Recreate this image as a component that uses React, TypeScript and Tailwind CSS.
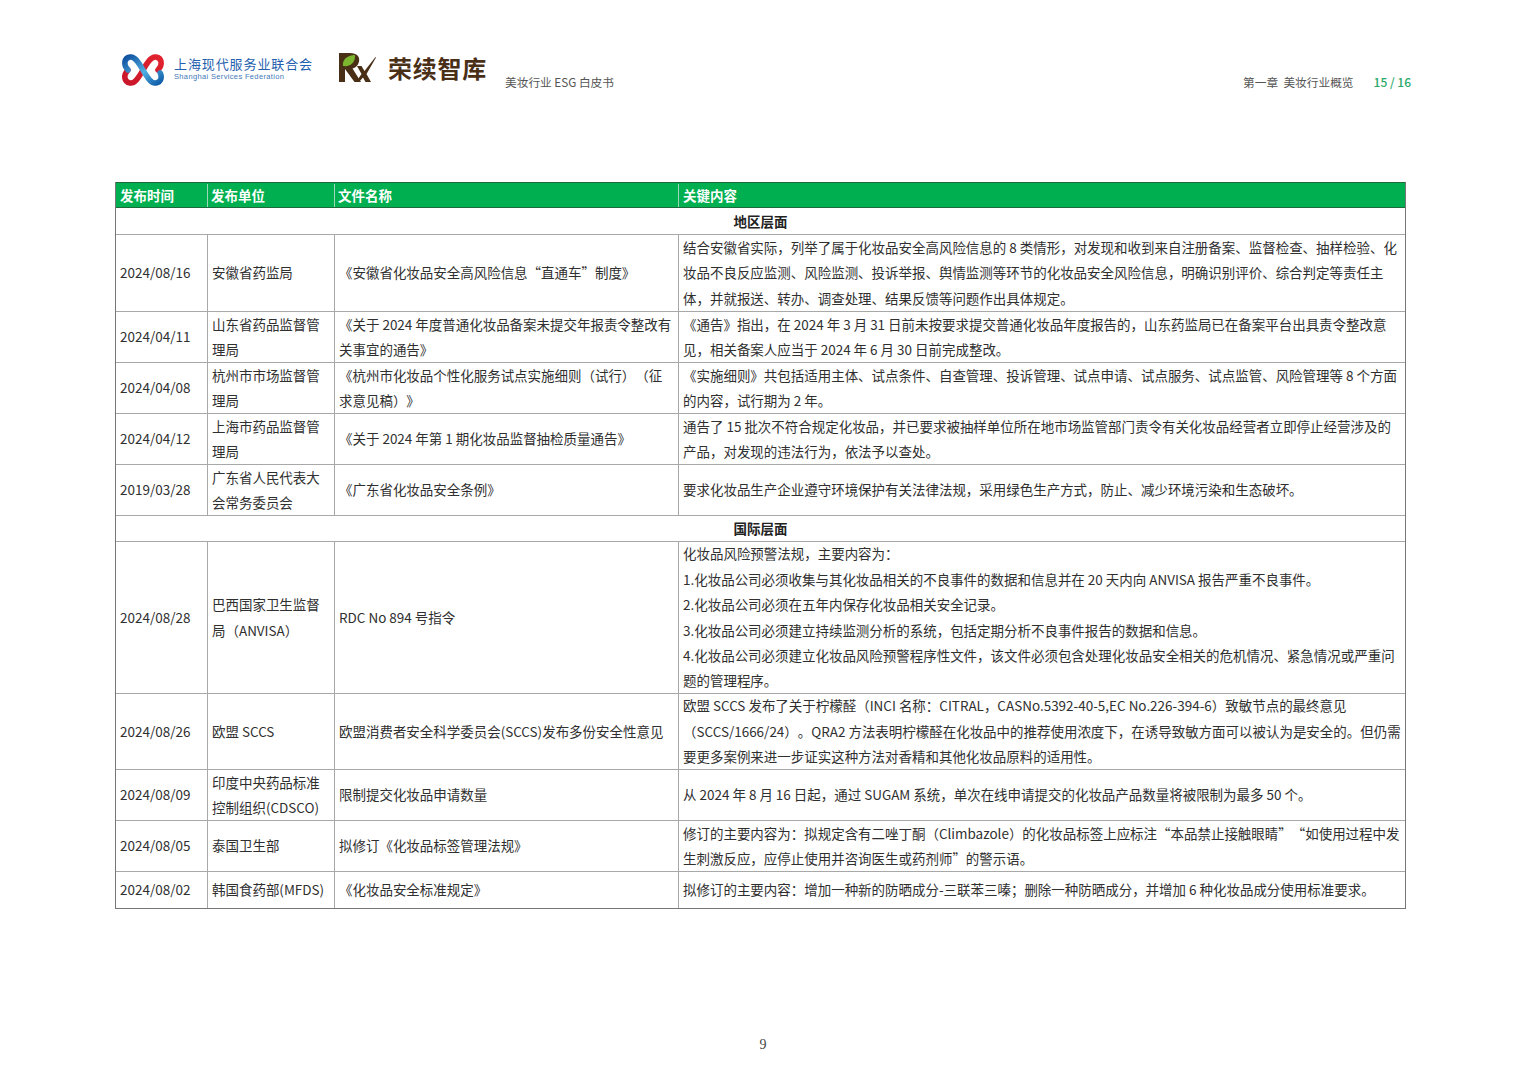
const F = { fontFamily: '"Noto Sans CJK SC", "Noto Sans", sans-serif' };

type Row = { h: number; d: string; u: string[]; n: string[]; k: string[] };

const r1: Row[] = [
  { h: 77, d: "2024/08/16", u: ["安徽省药监局"], n: ["《安徽省化妆品安全高风险信息“直通车”制度》"], k: ["结合安徽省实际，列举了属于化妆品安全高风险信息的 8 类情形，对发现和收到来自注册备案、监督检查、抽样检验、化", "妆品不良反应监测、风险监测、投诉举报、舆情监测等环节的化妆品安全风险信息，明确识别评价、综合判定等责任主", "体，并就报送、转办、调查处理、结果反馈等问题作出具体规定。"] },
  { h: 51, d: "2024/04/11", u: ["山东省药品监督管", "理局"], n: ["《关于 2024 年度普通化妆品备案未提交年报责令整改有", "关事宜的通告》"], k: ["《通告》指出，在 2024 年 3 月 31 日前未按要求提交普通化妆品年度报告的，山东药监局已在备案平台出具责令整改意", "见，相关备案人应当于 2024 年 6 月 30 日前完成整改。"] },
  { h: 51, d: "2024/04/08", u: ["杭州市市场监督管", "理局"], n: ["《杭州市化妆品个性化服务试点实施细则（试行）（征", "求意见稿）》"], k: ["《实施细则》共包括适用主体、试点条件、自查管理、投诉管理、试点申请、试点服务、试点监管、风险管理等 8 个方面", "的内容，试行期为 2 年。"] },
  { h: 51, d: "2024/04/12", u: ["上海市药品监督管", "理局"], n: ["《关于 2024 年第 1 期化妆品监督抽检质量通告》"], k: ["通告了 15 批次不符合规定化妆品，并已要求被抽样单位所在地市场监管部门责令有关化妆品经营者立即停止经营涉及的", "产品，对发现的违法行为，依法予以查处。"] },
  { h: 51, d: "2019/03/28", u: ["广东省人民代表大", "会常务委员会"], n: ["《广东省化妆品安全条例》"], k: ["要求化妆品生产企业遵守环境保护有关法律法规，采用绿色生产方式，防止、减少环境污染和生态破坏。"] },
];

const r2: Row[] = [
  { h: 152, d: "2024/08/28", u: ["巴西国家卫生监督", "局（ANVISA）"], n: ["RDC No 894 号指令"], k: ["化妆品风险预警法规，主要内容为：", "1.化妆品公司必须收集与其化妆品相关的不良事件的数据和信息并在 20 天内向 ANVISA 报告严重不良事件。", "2.化妆品公司必须在五年内保存化妆品相关安全记录。", "3.化妆品公司必须建立持续监测分析的系统，包括定期分析不良事件报告的数据和信息。", "4.化妆品公司必须建立化妆品风险预警程序性文件，该文件必须包含处理化妆品安全相关的危机情况、紧急情况或严重问", "题的管理程序。"] },
  { h: 76, d: "2024/08/26", u: ["欧盟 SCCS"], n: ["欧盟消费者安全科学委员会(SCCS)发布多份安全性意见"], k: ["欧盟 SCCS 发布了关于柠檬醛（INCI 名称：CITRAL，CASNo.5392-40-5,EC No.226-394-6）致敏节点的最终意见", "（SCCS/1666/24）。QRA2 方法表明柠檬醛在化妆品中的推荐使用浓度下，在诱导致敏方面可以被认为是安全的。但仍需", "要更多案例来进一步证实这种方法对香精和其他化妆品原料的适用性。"] },
  { h: 51, d: "2024/08/09", u: ["印度中央药品标准", "控制组织(CDSCO)"], n: ["限制提交化妆品申请数量"], k: ["从 2024 年 8 月 16 日起，通过 SUGAM 系统，单次在线申请提交的化妆品产品数量将被限制为最多 50 个。"] },
  { h: 51, d: "2024/08/05", u: ["泰国卫生部"], n: ["拟修订《化妆品标签管理法规》"], k: ["修订的主要内容为：拟规定含有二唑丁酮（Climbazole）的化妆品标签上应标注“本品禁止接触眼睛”“如使用过程中发", "生刺激反应，应停止使用并咨询医生或药剂师”的警示语。"] },
  { h: 36, d: "2024/08/02", u: ["韩国食药部(MFDS)"], n: ["《化妆品安全标准规定》"], k: ["拟修订的主要内容：增加一种新的防晒成分-三联苯三嗪；删除一种防晒成分，并增加 6 种化妆品成分使用标准要求。"] },
];

function Lines({ l }: { l: string[] }) {
  return (
    <div className="flex flex-col">
      {l.map((t, i) => (
        <div key={i} className="leading-[25.4px] whitespace-nowrap">{t}</div>
      ))}
    </div>
  );
}

function Cell({ w, last, children }: { w: string; last?: boolean; children: React.ReactNode }) {
  return (
    <div className={`${w} shrink-0 flex items-center pl-[4px] ${last ? "" : "border-r border-[#a8a8a8]"}`}>
      {children}
    </div>
  );
}

function DataRow({ r, end }: { r: Row; end?: boolean }) {
  return (
    <div className={`flex ${end ? "" : "border-b border-[#a8a8a8]"}`} style={{ height: r.h }}>
      <Cell w="w-[92px]"><Lines l={[r.d]} /></Cell>
      <Cell w="w-[127px]"><Lines l={r.u} /></Cell>
      <Cell w="w-[344px]"><Lines l={r.n} /></Cell>
      <Cell w="flex-1" last><Lines l={r.k} /></Cell>
    </div>
  );
}

function Section({ t, h }: { t: string; h: string }) {
  return (
    <div className={`${h} flex items-center justify-center border-b border-[#a8a8a8] font-bold text-[#222]`}>{t}</div>
  );
}

function SsfLogo() {
  return (
    <svg width="44" height="36" viewBox="0 0 44 36" className="shrink-0">
      <defs>
        <linearGradient id="b1" x1="0" y1="0" x2="1" y2="1">
          <stop offset="0" stopColor="#0f4f9e" />
          <stop offset="0.55" stopColor="#4fb0e2" />
          <stop offset="1" stopColor="#0f5aa8" />
        </linearGradient>
        <linearGradient id="r1" x1="0" y1="1" x2="1" y2="0">
          <stop offset="0" stopColor="#c9162a" />
          <stop offset="1" stopColor="#e2232f" />
        </linearGradient>
      </defs>
      <path d="M7 18 C2 23 3 30 9 31 C14 32 18 25 22 18 C26 11 30 4 35 5 C41 6 42 13 37 18" fill="none" stroke="url(#r1)" strokeWidth="5.500" strokeLinecap="round" />
      <path d="M7 18 C2 13 3 6 9 5 C14 4 18 11 22 18 C26 25 30 32 35 31 C41 30 42 23 37 18" fill="none" stroke="url(#b1)" strokeWidth="5.500" strokeLinecap="round" strokeDasharray="68 20" />
    </svg>
  );
}

function RxLogo() {
  return (
    <svg width="38" height="32" viewBox="0 0 38 32" className="shrink-0">
      <path d="M0 1 H11 C18 1 21 5 20 9.500 C19 14 16 16 13.500 16.500 L22 30 H15.500 L6 17 V30 H0 Z" fill="#4a2f17" />
      <path d="M4 14 C3 8 8 3 16 3 C16.500 10 12 15 4 14 Z" fill="#7cb52e" />
      <path d="M18 14 H22.500 L25.500 19 L36.500 5 L37 5.500 L27.500 22 L32 30 H26.500 L24 25.500 L20 30 H17 L22.500 22 Z" fill="#4a2f17" />
    </svg>
  );
}

export default function App() {
  return (
    <div className="w-[1527px] h-[1080px] bg-white text-[13.47px] text-[#2f2f2f] flex flex-col pl-[115px] [text-spacing-trim:space-all]" style={F}>
      <header className="h-[182px] w-[1296px] pt-[51px] flex items-start shrink-0">
        <div className="ml-[6px] mt-[1px]"><SsfLogo /></div>
        <div className="ml-[9px] mt-[5px] w-[139px]">
          <div className="text-[13px] leading-[16px] text-[#1f5fae] tracking-[0.9px] whitespace-nowrap">上海现代服务业联合会</div>
          <div className="text-[7.5px] leading-[9px] text-[#3f78b8] tracking-[0.35px] whitespace-nowrap" style={{ fontFamily: '"Liberation Sans", sans-serif' }}>Shanghai Services Federation</div>
        </div>
        <div className="ml-[26px] mt-[1px]"><RxLogo /></div>
        <div className="ml-[11px] mt-[1px] text-[24px] leading-[32px] font-bold tracking-[0.75px] text-[#4a2f17] whitespace-nowrap">荣续智库</div>
        <div className="ml-[18px] mt-[23px] text-[11.7px] leading-[16px] text-[#555] whitespace-nowrap">美妆行业 ESG 白皮书</div>
        <div className="ml-auto mt-[23px] text-[11.7px] leading-[16px] text-[#555] whitespace-pre">第一章  美妆行业概览</div>
        <div className="ml-[20px] mt-[23px] text-[12px] leading-[16px] font-medium text-[#27a869] whitespace-nowrap">15 / 16</div>
      </header>

      <div className="w-[1291px] border border-[#777] border-t-0 shrink-0">
        <div className="h-[26px] flex bg-[#00b050] text-white font-bold border-t border-b border-[#1d6b3c] pt-[1px]">
          <div className="w-[92px] pl-[4px] flex items-center border-r border-[#9fd8b8]">发布时间</div>
          <div className="w-[127px] pl-[3px] flex items-center border-r border-[#9fd8b8]">发布单位</div>
          <div className="w-[344px] pl-[3px] flex items-center border-r border-[#9fd8b8]">文件名称</div>
          <div className="flex-1 pl-[4px] flex items-center">关键内容</div>
        </div>
        <Section t="地区层面" h="h-[27px]" />
        {r1.map((r) => <DataRow key={r.d + r.u[0]} r={r} />)}
        <Section t="国际层面" h="h-[26px]" />
        {r2.map((r, i) => <DataRow key={i} r={r} end={i === r2.length - 1} />)}
      </div>

      <div className="w-[1296px] mt-[126px] text-center text-[14px] leading-[20px] text-[#444]" style={{ fontFamily: '"Liberation Serif", serif' }}>9</div>
    </div>
  );
}
